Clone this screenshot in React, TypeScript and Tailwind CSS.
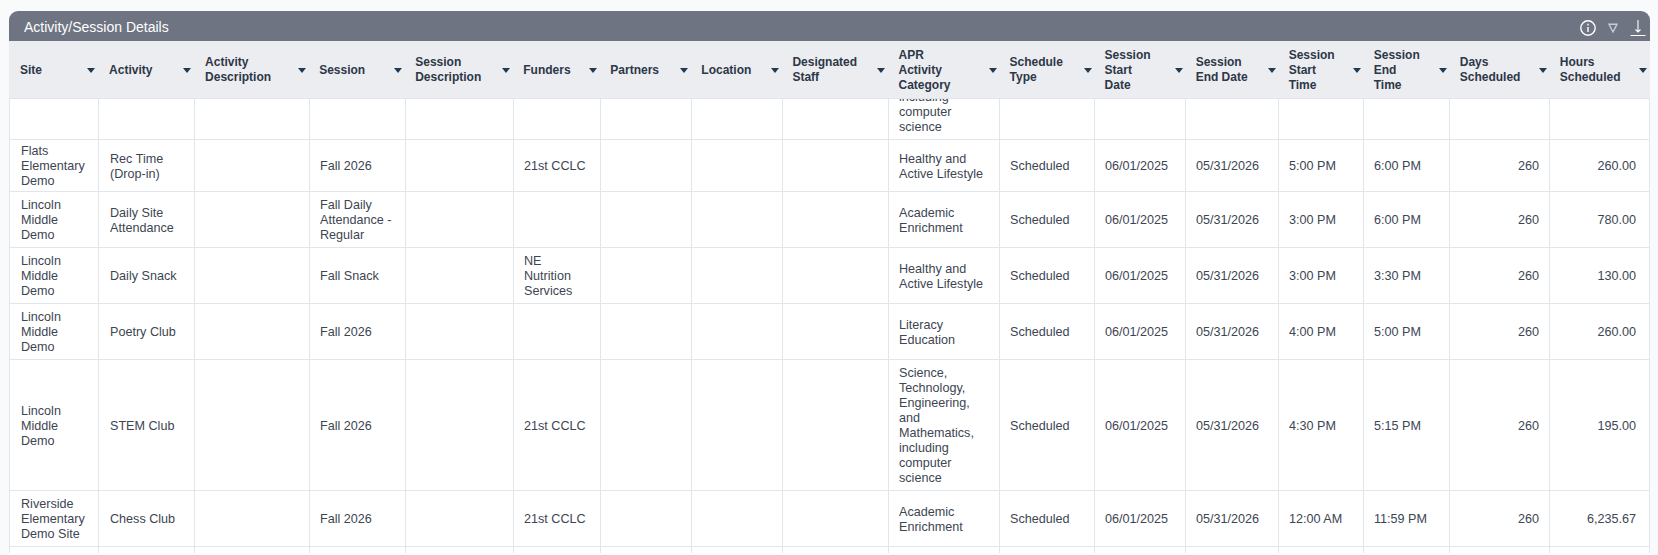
const headers: string[][] = [
  ['Site'],
  ['Activity'],
  ['Activity', 'Description'],
  ['Session'],
  ['Session', 'Description'],
  ['Funders'],
  ['Partners'],
  ['Location'],
  ['Designated', 'Staff'],
  ['APR', 'Activity', 'Category'],
  ['Schedule', 'Type'],
  ['Session', 'Start', 'Date'],
  ['Session', 'End Date'],
  ['Session', 'Start', 'Time'],
  ['Session', 'End', 'Time'],
  ['Days', 'Scheduled'],
  ['Hours', 'Scheduled'],
];

const STEM_CATEGORY = ['Science,', 'Technology,', 'Engineering,', 'and', 'Mathematics,', 'including', 'computer', 'science'];

const rows: { h: string; cells: string[][] }[] = [
  {
    h: 'h-[131px]',
    cells: [[], [], [], [], [], [], [], [], [], STEM_CATEGORY, [], [], [], [], [], [], []],
  },
  {
    h: 'h-[52px]',
    cells: [['Flats', 'Elementary', 'Demo'], ['Rec Time', '(Drop-in)'], [], ['Fall 2026'], [], ['21st CCLC'], [], [], [], ['Healthy and', 'Active Lifestyle'], ['Scheduled'], ['06/01/2025'], ['05/31/2026'], ['5:00 PM'], ['6:00 PM'], ['260'], ['260.00']],
  },
  {
    h: 'h-[56px]',
    cells: [['Lincoln', 'Middle', 'Demo'], ['Daily Site', 'Attendance'], [], ['Fall Daily', 'Attendance -', 'Regular'], [], [], [], [], [], ['Academic', 'Enrichment'], ['Scheduled'], ['06/01/2025'], ['05/31/2026'], ['3:00 PM'], ['6:00 PM'], ['260'], ['780.00']],
  },
  {
    h: 'h-[56px]',
    cells: [['Lincoln', 'Middle', 'Demo'], ['Daily Snack'], [], ['Fall Snack'], [], ['NE', 'Nutrition', 'Services'], [], [], [], ['Healthy and', 'Active Lifestyle'], ['Scheduled'], ['06/01/2025'], ['05/31/2026'], ['3:00 PM'], ['3:30 PM'], ['260'], ['130.00']],
  },
  {
    h: 'h-[56px]',
    cells: [['Lincoln', 'Middle', 'Demo'], ['Poetry Club'], [], ['Fall 2026'], [], [], [], [], [], ['Literacy', 'Education'], ['Scheduled'], ['06/01/2025'], ['05/31/2026'], ['4:00 PM'], ['5:00 PM'], ['260'], ['260.00']],
  },
  {
    h: 'h-[131px]',
    cells: [['Lincoln', 'Middle', 'Demo'], ['STEM Club'], [], ['Fall 2026'], [], ['21st CCLC'], [], [], [], STEM_CATEGORY, ['Scheduled'], ['06/01/2025'], ['05/31/2026'], ['4:30 PM'], ['5:15 PM'], ['260'], ['195.00']],
  },
  {
    h: 'h-[56px]',
    cells: [['Riverside', 'Elementary', 'Demo Site'], ['Chess Club'], [], ['Fall 2026'], [], ['21st CCLC'], [], [], [], ['Academic', 'Enrichment'], ['Scheduled'], ['06/01/2025'], ['05/31/2026'], ['12:00 AM'], ['11:59 PM'], ['260'], ['6,235.67']],
  },
  {
    h: 'h-[56px]',
    cells: [[], [], [], [], [], [], [], [], [], [], [], [], [], [], [], [], []],
  },
];

const SortCaret = () => (
  <svg viewBox="0 0 8 5" className="h-[5px] w-2 shrink-0 fill-[#1f3a52]">
    <path d="M0 0h8L4 5z" />
  </svg>
);

const Cols = () => (
  <colgroup>
    {[89, 96, 115, 96, 108, 87, 91, 91, 106, 111, 95, 91, 93, 85, 86, 100, 100].map((w, i) => (
      <col key={i} style={{ width: w }} />
    ))}
  </colgroup>
);

export default function App() {
  return (
    <div className="h-[555px] overflow-hidden bg-[#f8fafc] pl-[9px] pr-2 pt-[11px] font-['Liberation_Sans',sans-serif]">
      <div className="h-full bg-white">
        {/* Title bar */}
        <div className="flex h-[30px] items-center justify-between rounded-t-[9px] bg-[#6e7482] pl-[15px] pr-[4px] pt-[3px] text-[14px] text-white">
          <span>Activity/Session Details</span>
          <div className="flex items-center gap-[12px]">
            <svg viewBox="0 0 16 16" className="h-4 w-4 fill-none stroke-white stroke-[1.4]">
              <circle cx="8" cy="8" r="7.2" />
              <path d="M8 7v5M8 3.8v1.8" />
            </svg>
            <svg viewBox="0 0 10 10" className="h-[10px] w-[10px] fill-none stroke-[#c9ccd3] stroke-[1.4]">
              <path d="M1 1.2h8L5 9z" />
            </svg>
            <svg viewBox="0 0 16 16" className="h-4 w-4 fill-none stroke-white stroke-[1.1]">
              <path d="M8 0v12M5.5 9.5 8 12l2.5-2.5M0.5 15.5h15" />
            </svg>
          </div>
        </div>

        {/* Header row */}
        <table className="w-full table-fixed border-collapse bg-[#ecedf0]">
          <Cols />
          <thead>
            <tr className="h-[57px]">
              {headers.map((label, i) => (
                <th key={i} className={`border-b border-[#dfe5ea] pb-0 pr-[3px] pt-[2px] text-left align-middle ${i < 3 ? 'pl-[11px]' : 'pl-[10px]'}`}>
                  <div className="flex items-center justify-between text-[12px] font-bold leading-[15px] text-[#2d3748]">
                    <span>
                      {label.map((line) => (
                        <span key={line} className="block whitespace-nowrap">{line}</span>
                      ))}
                    </span>
                    <SortCaret />
                  </div>
                </th>
              ))}
            </tr>
          </thead>
        </table>

        {/* Scrolled body */}
        <div className="h-[454px] overflow-hidden">
          <table className="-mt-[91px] w-full table-fixed border-collapse">
            <Cols />
            <tbody>
              {rows.map((row, r) => (
                <tr key={r} className={row.h}>
                  {row.cells.map((cell, c) => (
                    <td
                      key={c}
                      className={`border border-[#dfe6ec] pb-0 pt-[3px] align-middle text-[12.6px] leading-[15px] text-[#3d4552] ${c < 2 ? 'pl-[11px]' : 'pl-[10px]'} ${c === 16 ? 'pr-[13px]' : 'pr-[10px]'} ${c >= 15 ? 'text-right' : 'text-left'}`}
                    >
                      {cell.map((line, l) => (
                        <span key={l} className="block whitespace-nowrap">{line}</span>
                      ))}
                    </td>
                  ))}
                </tr>
              ))}
            </tbody>
          </table>
        </div>
      </div>
    </div>
  );
}
